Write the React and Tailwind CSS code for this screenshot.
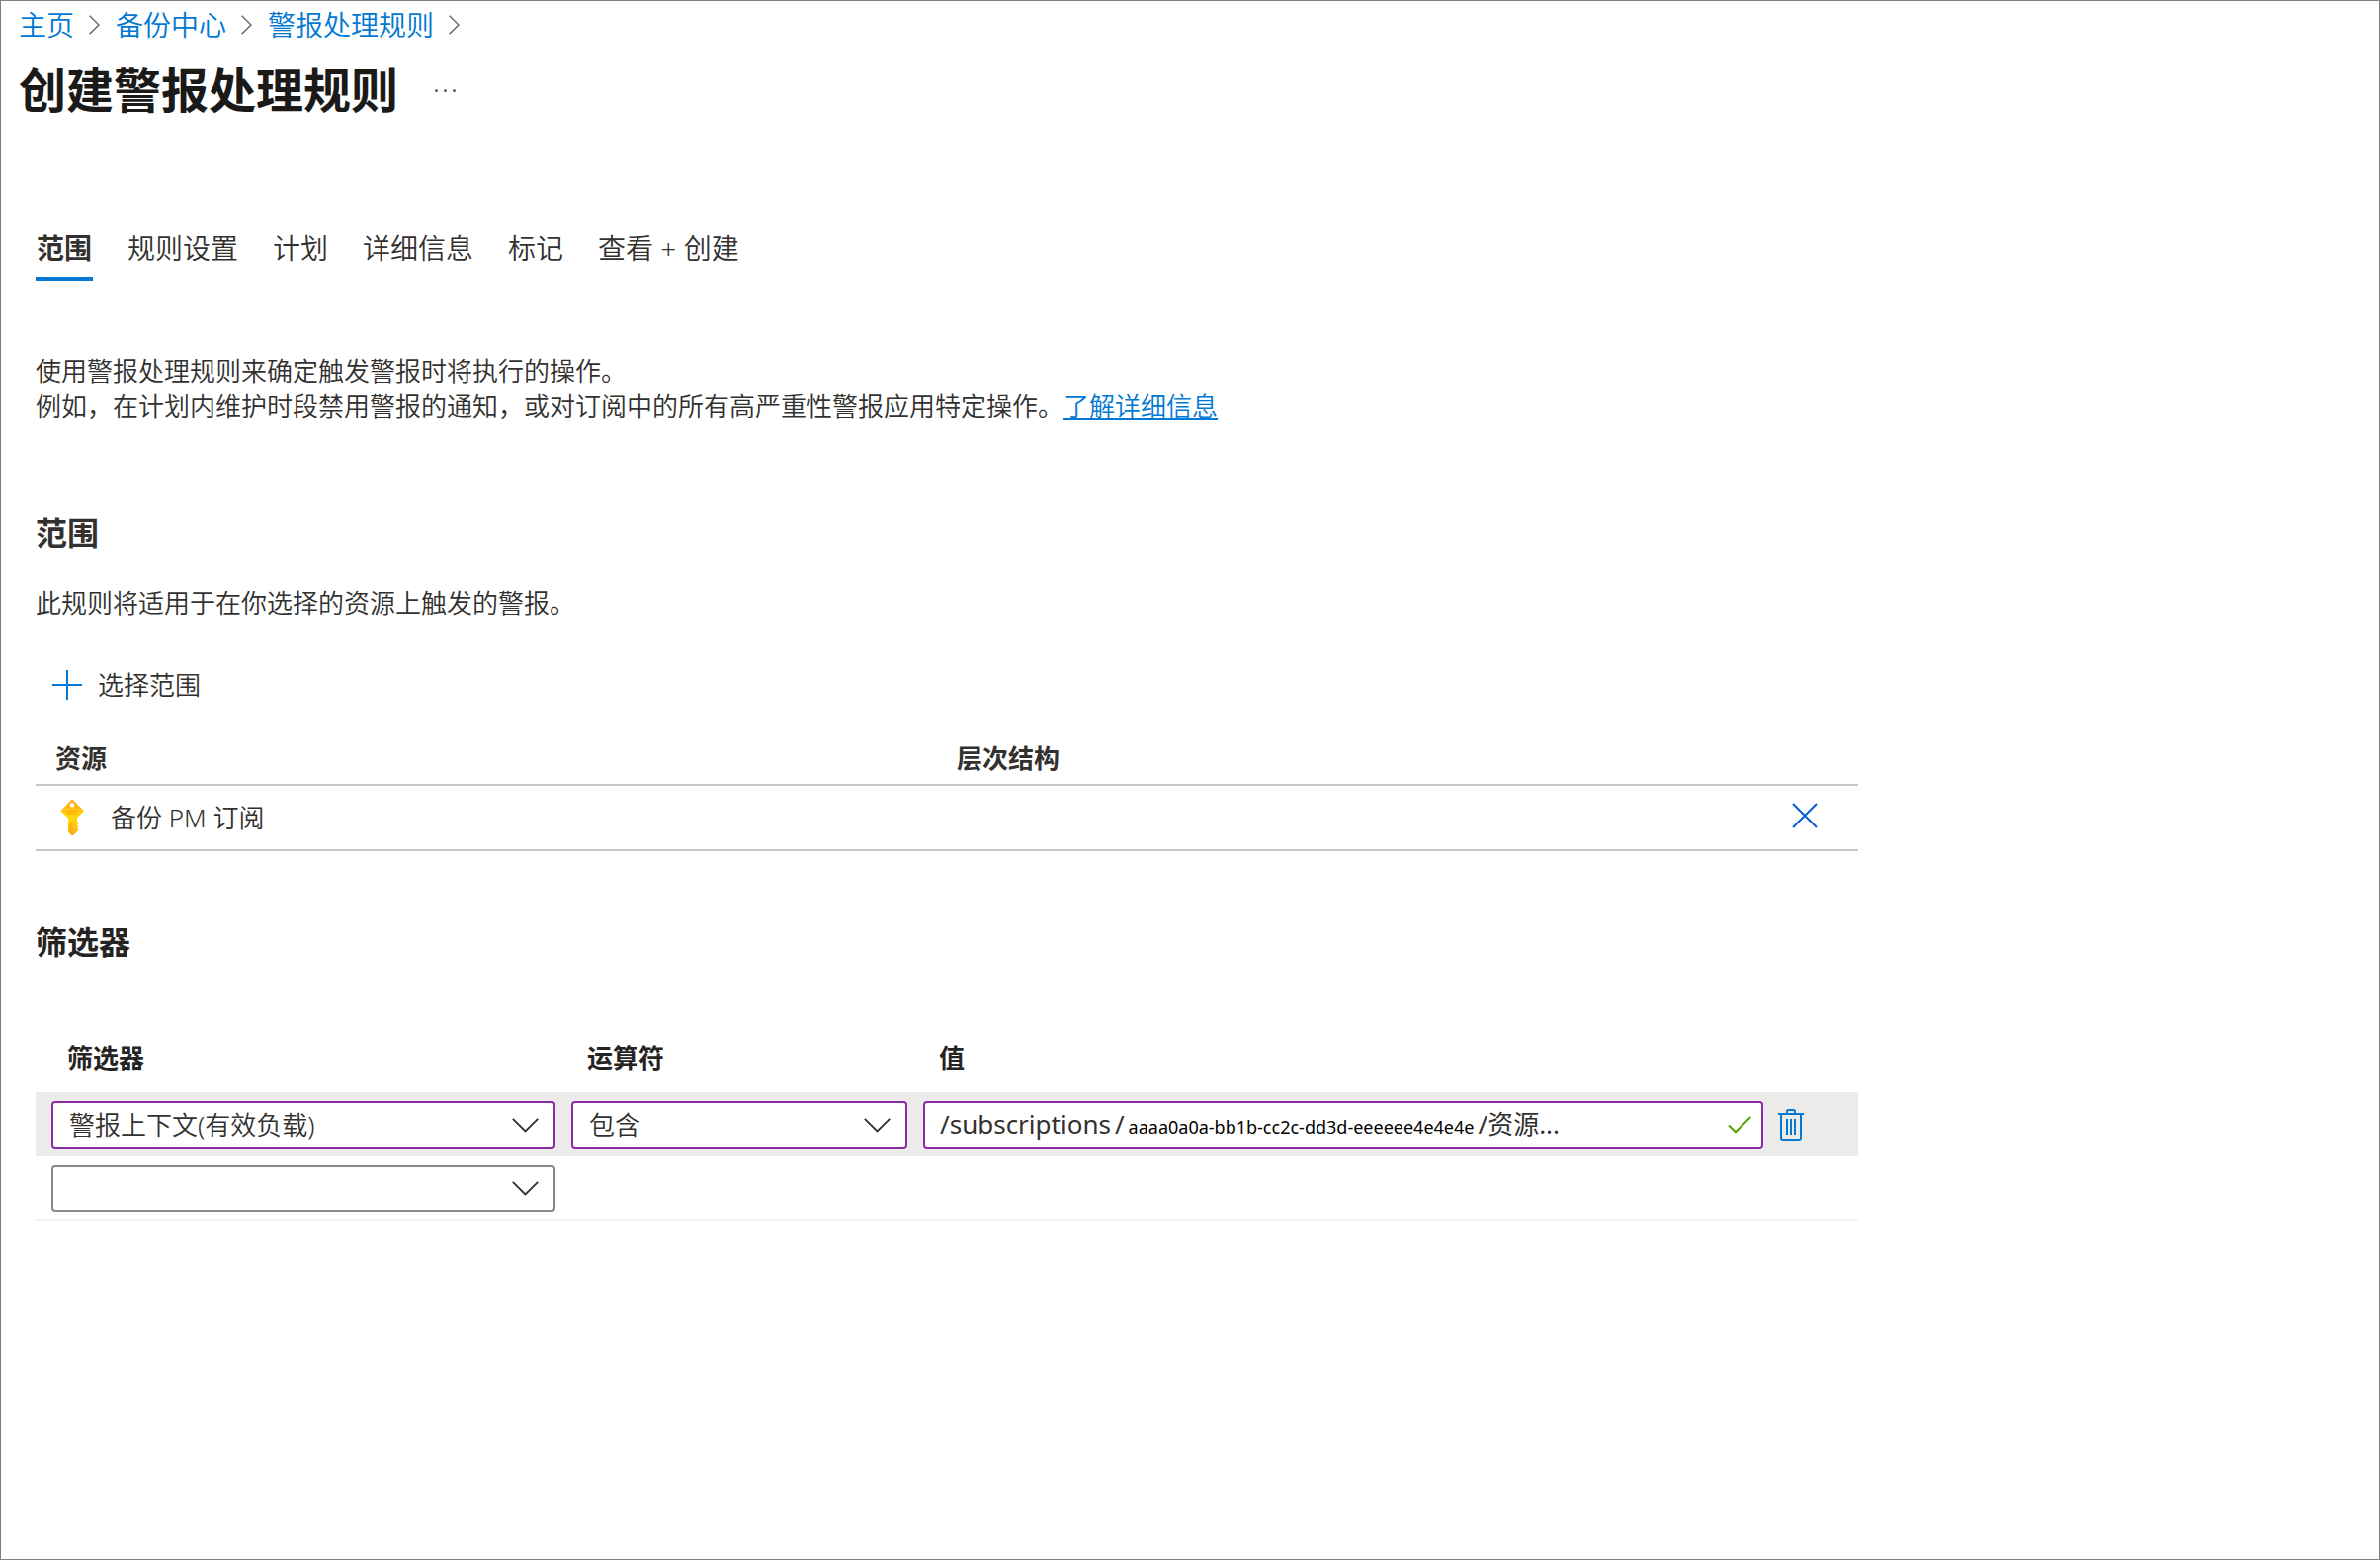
import { useState } from "react";

const crumbs = ["主页", "备份中心", "警报处理规则"];

const tabs = ["范围", "规则设置", "计划", "详细信息", "标记", "查看 + 创建"];

const scopes = [{ name: "备份 PM 订阅", hierarchy: "" }];

const CrumbChevron = () => (
  <svg className="ml-[15px] mr-4 h-5 w-[11px]" viewBox="0 0 11 20" fill="none" stroke="#605e5c" strokeWidth="1.3">
    <path d="M0.7 0.7 L10 10 L0.7 19.3" />
  </svg>
);

const KeyIcon = () => (
  <svg className="h-9 w-6 shrink-0" viewBox="0 0 24 36">
    <defs>
      <linearGradient id="keyFill" x1="0" y1="0" x2="0" y2="1">
        <stop offset="0" stopColor="#ffa61a" />
        <stop offset="0.45" stopColor="#ffd70f" />
        <stop offset="0.75" stopColor="#ffcb12" />
        <stop offset="1" stopColor="#fea11b" />
      </linearGradient>
    </defs>
    <path
      fill="url(#keyFill)"
      d="M10.6 0.7a2 2 0 0 1 2.8 0l9.4 9.2a1.9 1.9 0 0 1 0 2.7L17 18.6v3.2l1.2 1.2v1l-1.2 1.2 1.2 1.3v1L17 28.7l1.2 1.3v1l-5 4.7a1.4 1.4 0 0 1-2 0L8 32.4V18.8l-6.6-6.2a1.9 1.9 0 0 1 0-2.7z"
    />
    <circle cx="12" cy="5.3" r="2.3" fill="#fff" />
    <path d="M6.5 11.5h11.5M6.5 14h11.5" stroke="#ff9300" strokeWidth="1.2" opacity="0.75" />
    <path d="M10.5 22.5v9" stroke="#ff9300" strokeWidth="1.4" opacity="0.75" />
  </svg>
);

const TrashIcon = () => (
  <svg className="h-8 w-[26px]" viewBox="0 0 26 32" fill="none" stroke="#0078d4" strokeWidth="2">
    <path d="M0 5h26M9 5V2.5a1.5 1.5 0 0 1 1.5-1.5h5a1.5 1.5 0 0 1 1.5 1.5V5" />
    <path d="M3 5v24a2 2 0 0 0 2 2h16a2 2 0 0 0 2-2V5M9 10v16M13 10v16M17 10v16" />
  </svg>
);

function Dropdown({ label, value, onChange, options, changed }) {
  return (
    <div className="relative">
      <select
        aria-label={label}
        value={value}
        onChange={(e) => onChange(e.target.value)}
        className={
          "block h-12 w-full appearance-none rounded border-2 bg-white pl-4 pr-14 " +
          (changed ? "border-[#8a2da5]" : "border-[#8a8886]")
        }
      >
        {options.map((option) => (
          <option key={option} value={option}>
            {option}
          </option>
        ))}
      </select>
      <svg
        className="pointer-events-none absolute right-[17px] top-[17px] h-[15px] w-[27px]"
        viewBox="0 0 27 15"
        fill="none"
        stroke="#323130"
        strokeWidth="1.8"
      >
        <path d="M0.8 0.8 L13.5 13.5 L26.2 0.8" />
      </svg>
    </div>
  );
}

export default function CreateAlertRulePage() {
  const [activeTab, setActiveTab] = useState("范围");
  const [filter, setFilter] = useState("警报上下文(有效负载)");
  const [operator, setOperator] = useState("包含");
  const [nextFilter, setNextFilter] = useState("");
  const [value, setValue] = useState(["/subscriptions", "/", "aaaa0a0a-bb1b-cc2c-dd3d-eeeeee4e4e4e", "/资源..."]);

  return (
    <div className="min-h-screen border border-[#7f7f7f] bg-white font-['Noto_Sans','Noto_Sans_CJK_SC',sans-serif] text-[26px] font-[350] leading-9 text-[#323130]">
      <nav className="flex h-12 items-center pl-[18px] text-[28px]">
        {crumbs.map((crumb) => (
          <div key={crumb} className="flex items-center">
            <a href="#" className="text-[#0078d4]">
              {crumb}
            </a>
            <CrumbChevron />
          </div>
        ))}
      </nav>

      <header className="flex items-center pl-[18px]">
        <h1 className="text-[48px] font-bold leading-[84px] text-[#1b1a19]">创建警报处理规则</h1>
        <button type="button" aria-label="更多" className="ml-[33px] flex gap-[6px] p-1">
          <span className="size-[3px] rounded-full bg-[#605e5c]" />
          <span className="size-[3px] rounded-full bg-[#605e5c]" />
          <span className="size-[3px] rounded-full bg-[#605e5c]" />
        </button>
      </header>

      <main className="max-w-[1914px] px-[35px]">
        <div role="tablist" className="mt-[89px] flex gap-[35px] text-[28px]">
          {tabs.map((tab) => (
            <button
              key={tab}
              type="button"
              role="tab"
              aria-selected={tab === activeTab}
              onClick={() => setActiveTab(tab)}
              className={
                "h-[62px] border-b-4 " +
                (tab === activeTab ? "border-[#0078d4] px-px font-bold" : "border-transparent")
              }
            >
              {tab}
            </button>
          ))}
        </div>

        <p className="mt-[73px]">
          使用警报处理规则来确定触发警报时将执行的操作。
          <br />
          例如，在计划内维护时段禁用警报的通知，或对订阅中的所有高严重性警报应用特定操作。
          <a href="#" className="text-[#0078d4] underline">
            了解详细信息
          </a>
        </p>

        {/* 范围 */}
        <h2 className="mt-[90px] text-[32px] font-bold leading-10">范围</h2>
        <p className="mt-[33px]">此规则将适用于在你选择的资源上触发的警报。</p>

        <button type="button" className="mt-[47px] flex h-9 items-center gap-4 pl-[17px]">
          <svg className="size-[30px]" viewBox="0 0 30 30" stroke="#0078d4" strokeWidth="2">
            <path d="M15 0v30M0 15h30" />
          </svg>
          选择范围
        </button>

        <table className="mt-[29px] w-full table-fixed border-collapse text-left">
          <thead>
            <tr className="h-[54px] border-b-2 border-[#c8c8c8]">
              <th className="w-1/2 pl-5 font-bold">资源</th>
              <th className="pl-[10px] font-bold">层次结构</th>
              <th className="w-[100px]" />
            </tr>
          </thead>
          <tbody>
            {scopes.map((scope) => (
              <tr key={scope.name} className="h-[66px] border-b-2 border-[#c8c8c8]">
                <td className="pl-[25px]">
                  <div className="flex items-center gap-[27px]">
                    <KeyIcon />
                    {scope.name}
                  </div>
                </td>
                <td>{scope.hierarchy}</td>
                <td>
                  <button type="button" aria-label="移除" className="mb-1 ml-[33px] block">
                    <svg className="size-[26px]" viewBox="0 0 26 26" stroke="#015cda" strokeWidth="2">
                      <path d="M1 1 L25 25 M25 1 L1 25" />
                    </svg>
                  </button>
                </td>
              </tr>
            ))}
          </tbody>
        </table>

        {/* 筛选器 */}
        <h2 className="mt-[72px] text-[32px] font-bold leading-10 text-[#252423]">筛选器</h2>

        <table className="mt-[62px] w-full table-fixed border-collapse text-left">
          <thead>
            <tr className="h-[70px] text-[#252423]">
              <th className="w-[526px] pl-8 font-bold">筛选器</th>
              <th className="w-[356px] pl-8 font-bold">运算符</th>
              <th className="pl-8 font-bold">值</th>
              <th className="w-24" />
            </tr>
          </thead>
          <tbody>
            <tr className="bg-[#edebe9]">
              <td className="pb-[7px] pl-4 pt-[9px]">
                <Dropdown
                  label="筛选器"
                  value={filter}
                  onChange={setFilter}
                  options={["警报上下文(有效负载)"]}
                  changed
                />
              </td>
              <td className="pb-[7px] pl-4 pt-[9px]">
                <Dropdown label="运算符" value={operator} onChange={setOperator} options={["包含"]} changed />
              </td>
              <td className="pb-[7px] pl-4 pt-[9px]">
                <div className="relative flex h-12 items-center rounded border-2 border-[#8a2da5] bg-white pl-[15px] pr-[10px] font-normal">
                  <span aria-hidden="true" className="flex flex-1 items-baseline gap-1">
                    <span>{value[0]}</span>
                    <span>{value[1]}</span>
                    <span className="text-[18px] text-black">{value[2]}</span>
                    <span>{value[3]}</span>
                  </span>
                  <input
                    type="text"
                    aria-label="值"
                    value={value.join("")}
                    onChange={(e) => setValue([e.target.value])}
                    className="absolute inset-0 bg-transparent pl-[15px] pr-14 text-transparent caret-[#323130]"
                  />
                  <svg className="h-[18px] w-6" viewBox="0 0 24 18" fill="none" stroke="#57a300" strokeWidth="2">
                    <path d="M1 9.5 L8 16.3 L23.2 1" />
                  </svg>
                </div>
              </td>
              <td className="pb-[7px] pl-[15px] pt-[9px]">
                <button type="button" aria-label="删除" className="block">
                  <TrashIcon />
                </button>
              </td>
            </tr>
            <tr className="border-b-2 border-[#f3f2f1]">
              <td className="pb-[7px] pl-4 pt-[9px]">
                <Dropdown label="筛选器" value={nextFilter} onChange={setNextFilter} options={[""]} />
              </td>
              <td />
              <td />
              <td />
            </tr>
          </tbody>
        </table>
      </main>
    </div>
  );
}
